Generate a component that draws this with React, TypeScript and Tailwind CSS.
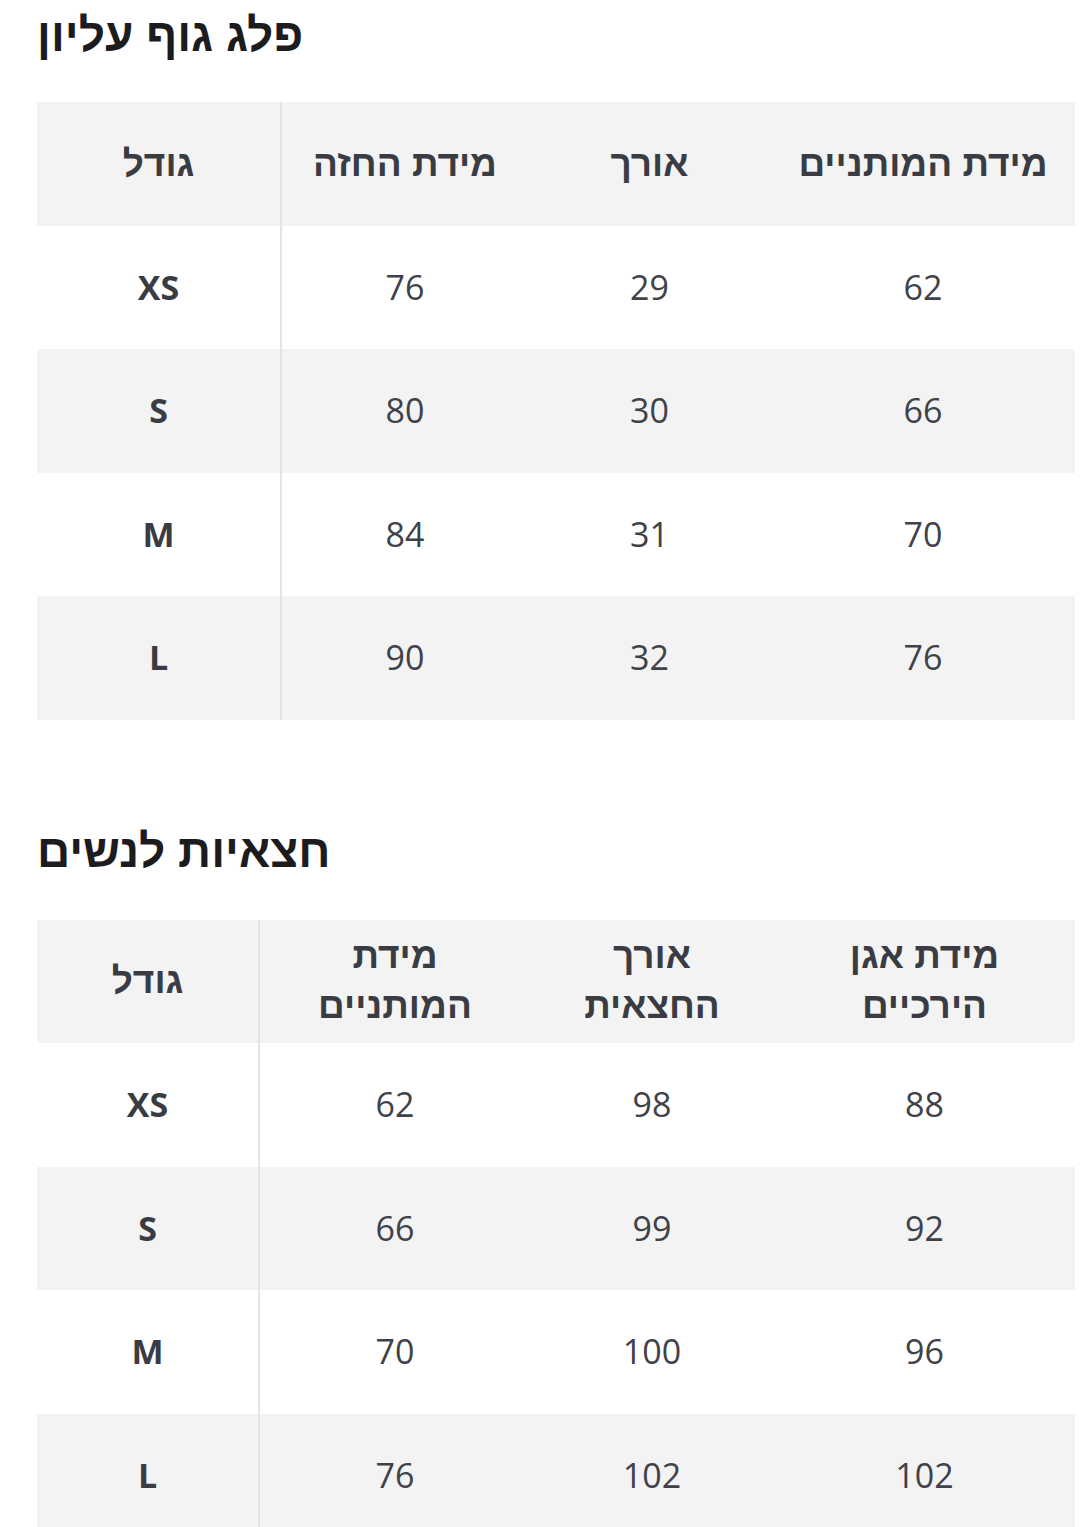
import React from "react";

type Table = {
  cols: string;
  headers: string[][];
  rows: string[][];
};

const t1: Table = {
  cols: "grid-cols-[245px_246px_243px_304px]",
  headers: [["גודל"], ["מידת החזה"], ["אורך"], ["מידת המותניים"]],
  rows: [
    ["XS", "76", "29", "62"],
    ["S", "80", "30", "66"],
    ["M", "84", "31", "70"],
    ["L", "90", "32", "76"],
  ],
};

const t2: Table = {
  cols: "grid-cols-[223px_270px_244px_301px]",
  headers: [["גודל"], ["מידת", "המותניים"], ["אורך", "החצאית"], ["מידת אגן", "הירכיים"]],
  rows: [
    ["XS", "62", "98", "88"],
    ["S", "66", "99", "92"],
    ["M", "70", "100", "96"],
    ["L", "76", "102", "102"],
  ],
};

function SizeTable({ t }: { t: Table }) {
  const all = [t.headers, ...t.rows.map((r) => r.map((c) => [c]))];
  return (
    <div className="flex w-[1038px] flex-col">
      {all.map((row, ri) => (
        <div
          key={ri}
          className={`grid h-[123.5px] ${t.cols} ${ri % 2 === 0 ? "bg-[#f3f3f4]" : "bg-white"}`}
        >
          {row.map((cell, ci) => (
            <div
              key={ci}
              className={`flex flex-col items-center justify-center ${
                ci === 0 ? "border-r-2 border-[#e4e4e6]" : ""
              } ${
                ri === 0
                  ? "font-['Liberation_Sans','DejaVu_Sans',sans-serif] text-[37px] font-bold leading-[50px] text-[#3a3c44]"
                  : ci === 0
                  ? "text-[34px] font-bold text-[#3a3c44]"
                  : "text-[34px] font-normal text-[#3f4249]"
              }`}
            >
              {cell.map((line, li) => (
                <span key={li}>{line}</span>
              ))}
            </div>
          ))}
        </div>
      ))}
    </div>
  );
}

export default function App() {
  return (
    <div className="h-[1527px] w-[1080px] overflow-hidden bg-white pl-[37px] font-['Open_Sans','Noto_Sans','DejaVu_Sans',sans-serif]">
      <h2 className="h-[102px] pt-[8px] font-['Liberation_Sans','DejaVu_Sans',sans-serif] text-[46px] font-bold leading-[54px] text-[#1c1c1e]">
        פלג גוף עליון
      </h2>
      <SizeTable t={t1} />
      <h2 className="h-[200px] pt-[104px] font-['Liberation_Sans','DejaVu_Sans',sans-serif] text-[46px] font-bold leading-[54px] text-[#1c1c1e]">
        חצאיות לנשים
      </h2>
      <SizeTable t={t2} />
    </div>
  );
}
